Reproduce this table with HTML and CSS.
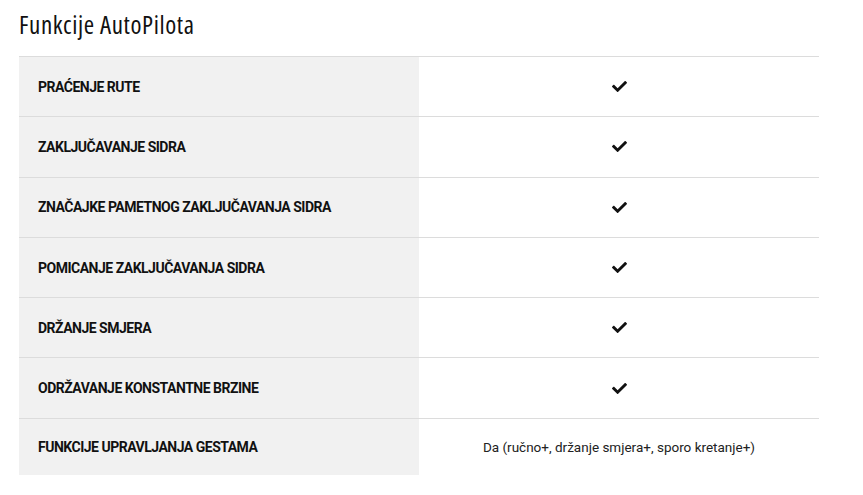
FILE: index.html
```html
<!DOCTYPE html>
<html>
<head>
<meta charset="utf-8">
<link rel="stylesheet" href="styles.css">
</head>
<body>
<div class="page">
  <h2 class="title">Funkcije AutoPilota</h2>
  <div class="table">
    <div class="row"><div class="label">PRAĆENJE RUTE</div><div class="value"><svg class="check" viewBox="0 0 512 512"><path d="M173.9 439.4l-166.4-166.4c-10-10-10-26.2 0-36.2l36.2-36.2c10-10 26.2-10 36.2 0L192 312.7 432.1 72.6c10-10 26.2-10 36.2 0l36.2 36.2c10 10 10 26.2 0 36.2l-294.4 294.4c-10 10-26.2 10-36.2 0z"/></svg></div></div>
    <div class="row"><div class="label">ZAKLJUČAVANJE SIDRA</div><div class="value"><svg class="check" viewBox="0 0 512 512"><path d="M173.9 439.4l-166.4-166.4c-10-10-10-26.2 0-36.2l36.2-36.2c10-10 26.2-10 36.2 0L192 312.7 432.1 72.6c10-10 26.2-10 36.2 0l36.2 36.2c10 10 10 26.2 0 36.2l-294.4 294.4c-10 10-26.2 10-36.2 0z"/></svg></div></div>
    <div class="row"><div class="label">ZNAČAJKE PAMETNOG ZAKLJUČAVANJA SIDRA</div><div class="value"><svg class="check" viewBox="0 0 512 512"><path d="M173.9 439.4l-166.4-166.4c-10-10-10-26.2 0-36.2l36.2-36.2c10-10 26.2-10 36.2 0L192 312.7 432.1 72.6c10-10 26.2-10 36.2 0l36.2 36.2c10 10 10 26.2 0 36.2l-294.4 294.4c-10 10-26.2 10-36.2 0z"/></svg></div></div>
    <div class="row"><div class="label">POMICANJE ZAKLJUČAVANJA SIDRA</div><div class="value"><svg class="check" viewBox="0 0 512 512"><path d="M173.9 439.4l-166.4-166.4c-10-10-10-26.2 0-36.2l36.2-36.2c10-10 26.2-10 36.2 0L192 312.7 432.1 72.6c10-10 26.2-10 36.2 0l36.2 36.2c10 10 10 26.2 0 36.2l-294.4 294.4c-10 10-26.2 10-36.2 0z"/></svg></div></div>
    <div class="row"><div class="label">DRŽANJE SMJERA</div><div class="value"><svg class="check" viewBox="0 0 512 512"><path d="M173.9 439.4l-166.4-166.4c-10-10-10-26.2 0-36.2l36.2-36.2c10-10 26.2-10 36.2 0L192 312.7 432.1 72.6c10-10 26.2-10 36.2 0l36.2 36.2c10 10 10 26.2 0 36.2l-294.4 294.4c-10 10-26.2 10-36.2 0z"/></svg></div></div>
    <div class="row"><div class="label">ODRŽAVANJE KONSTANTNE BRZINE</div><div class="value"><svg class="check" viewBox="0 0 512 512"><path d="M173.9 439.4l-166.4-166.4c-10-10-10-26.2 0-36.2l36.2-36.2c10-10 26.2-10 36.2 0L192 312.7 432.1 72.6c10-10 26.2-10 36.2 0l36.2 36.2c10 10 10 26.2 0 36.2l-294.4 294.4c-10 10-26.2 10-36.2 0z"/></svg></div></div>
    <div class="row last"><div class="label">FUNKCIJE UPRAVLJANJA GESTAMA</div><div class="value">Da (ručno+, držanje smjera+, sporo kretanje+)</div></div>
  </div>
</div>
</body>
</html>
```
FILE: styles.css
```css
html, body {
  margin: 0;
  padding: 0;
  background: #fff;
}
.page {
  padding: 0 44px 0 19px;
  font-family: Roboto, "Liberation Sans", sans-serif;
  color: #111;
}
.title {
  margin: 0;
  height: 56px;
  padding-top: 7px;
  box-sizing: border-box;
  font-family: "Open Sans", sans-serif;
  font-stretch: 75%;
  font-weight: 500;
  font-size: 25px;
  letter-spacing: 0.6px;
  color: #111;
}
.table {
  width: 800px;
}
.row {
  display: grid;
  grid-template-columns: 400px 400px;
  height: 60.3px;
  border-top: 1px solid #dcdcdc;
  box-sizing: border-box;
}
.row.last {
  height: 57px;
}
.label {
  background: #f1f1f1;
  display: flex;
  align-items: center;
  padding-left: 19px;
  font-weight: 700;
  font-size: 14px;
  letter-spacing: -0.5px;
  color: #111;
}
.value {
  display: flex;
  align-items: center;
  justify-content: center;
  font-size: 13.5px;
  color: #222;
}
.check {
  width: 15px;
  height: 15px;
  fill: #111;
}
```
